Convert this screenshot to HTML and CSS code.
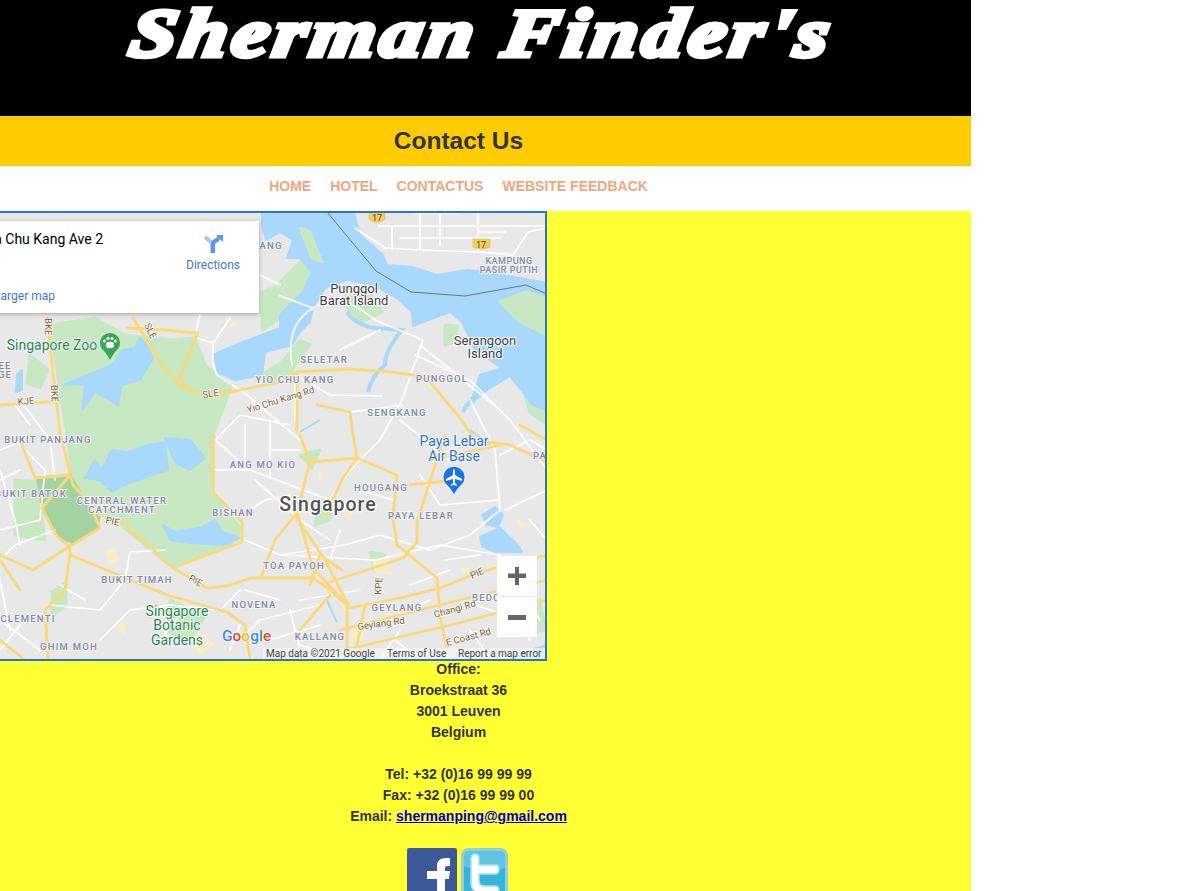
FILE: index.html
```html
<!DOCTYPE html>
<html lang="en">
<head>
<meta charset="utf-8">
<title>Contact Us</title>
<link rel="stylesheet" href="styles.css">
</head>
<body>
<div class="page">
  <header class="banner"><div class="logo">Sherman Finder's</div></header>
  <div class="titlebar"><h1>Contact Us</h1></div>
  <nav class="nav">
    <a href="#">Home</a><a href="#">Hotel</a><a href="#">ContactUs</a><a href="#">Website Feedback</a>
  </nav>
  <main class="content">
    <div class="mapframe">
      <svg class="map" viewBox="0 213 545 446" width="545" height="446" xmlns="http://www.w3.org/2000/svg">
        <g class="base">
          <rect class="land" x="0" y="205" width="550" height="460"/>
          <!-- greens -->
          <g class="green">
            <path d="M50 325 L95 318 L125 335 L170 340 L195 338 L205 365 L232 385 L213 435 L213 495 L242 530 L230 545 L173 568 L117 522 L73 485 L67 435 Z"/>
            <path d="M280 282 L300 262 L312 272 L303 292 L290 305 L280 318 Z"/>
            <path d="M345 296 L372 296 L382 312 L362 322 L350 315 Z"/>
            <path d="M524 392 L547 402 L547 425 L530 412 Z"/>
            <path d="M445 325 L457 326 L456 342 L445 345 Z"/>
            <path d="M15 480 L38 482 L45 540 L15 535 Z"/>
            <path d="M170 600 L205 615 L190 640 L168 632 Z"/>
            <path d="M262 292 L280 285 L280 318 L262 330 Z"/>
            <path d="M262 375 L297 352 L292 372 L268 385 Z"/>
            <path d="M300 340 L310 345 L290 372 L280 365 Z"/>
            <path d="M125 430 L140 428 L145 440 L130 442 Z"/>
            <path d="M30 355 L48 370 L40 388 L27 383 Z"/>
            <path d="M300 455 L320 450 L312 468 Z"/>
            <path d="M320 500 L335 498 L330 520 L315 525 Z"/>
            <path d="M515 610 L540 600 L545 630 L520 635 Z"/>
            <path d="M370 552 L385 555 L375 570 Z"/>
            <path d="M52 592 L66 582 L66 606 L52 616 Z"/>
          </g>
          <path class="darkgreen" d="M37 478 L70 475 L82 495 L100 515 L97 530 L72 543 L56 535 L42 508 Z"/>
          <g class="sand">
            <path d="M105 550 L115 548 L120 560 L110 565 Z"/>
            <path d="M372 560 L390 558 L392 575 L375 572 Z"/>
            <path d="M320 470 Q326 472 322 482 Q316 478 320 470 Z"/>
            <path d="M344 508 Q355 510 350 520 Q342 518 344 508 Z"/>
            <path d="M516 520 L528 524 L522 530 Z"/>
            <path d="M350 630 L360 625 L365 640 L352 642 Z"/>
            <path d="M460 570 L470 566 L472 578 Z"/>
            <path d="M230 318 L238 324 L230 328 Z"/>
            <path d="M115 625 L125 620 L125 635 Z"/>
            <path d="M190 640 L200 632 L215 645 L200 655 Z"/>
          </g>
          <!-- sea -->
          <path class="water" d="M262 205 L352 205 L360 235 L383 255 L387 265 L413 267 L437 275 L467 270 L483 272 L520 278 L547 283 L547 410 L533 405 L510 376 L487 390 L470 405 L480 375 L502 368 L475 350 L462 322 L450 312 L423 322 L413 326 L412 312 L397 298 L373 285 L347 280 L325 288 L313 308 L310 322 L300 332 L292 345 L265 352 L262 375 L235 380 L218 372 L213 355 L235 345 L280 328 L280 315 L290 305 L303 292 L312 272 L300 258 L287 258 L293 240 L280 232 L266 240 L262 225 Z"/>
          <path class="green-s" d="M300 228 L310 232 L322 262 L312 258 Z"/>
          <path class="green-s" d="M500 302 L525 292 L547 298 L547 335 L520 322 Z"/>
          <path class="channel" d="M347 312 Q355 325 375 328 L402 330 Q385 350 385 365 Q372 375 368 392 M463 412 Q470 395 497 382 L510 374"/>
          <path class="channel-thin" d="M300 432 L320 420 M470 430 L490 445 M327 600 L332 612 L337 622"/>
          <!-- reservoirs -->
          <path class="water" d="M153 358 L147 345 L140 338 L135 348 L122 350 L112 365 L95 372 L63 385 L85 384 L82 410 L95 392 L118 405 L122 385 L140 380 Z"/>
          <path class="water" d="M85 478 L95 460 L102 470 L112 450 L128 452 L148 445 L165 442 L168 470 L155 474 L125 485 L112 492 L100 480 Z"/>
          <path class="water" d="M165 438 L190 440 L205 458 L190 470 L175 462 Z"/>
          <path class="water" d="M163 525 L175 532 L200 528 L215 520 L222 532 L240 538 L225 545 L190 543 L170 540 Z"/>
          <path class="water" d="M482 515 L495 507 L503 515 L498 527 L487 525 Z"/>
          <path class="water" d="M480 537 L500 528 L518 545 L522 552 L495 552 L482 546 Z"/>
          <path class="water" d="M515 655 L547 645 L547 660 L510 660 Z"/>
          <path class="water" d="M17 375 L22 370 L22 390 L16 392 Z"/>
          <!-- border line -->
          <path class="border" d="M327 212 L376 271 L411 292 L465 296 L526 285 L547 294"/>
          <!-- minor roads -->
          <g class="roads">
            <path d="M355 228 L385 248 L420 250 L480 252 L513 255 L528 232 L547 228 M420 213 V250 M440 213 V245 M478 213 V252 M378 226 H547 M400 238 H500 M392 226 V250 M478 232 H505 M415 213 H460"/>
            <path d="M280 296 L313 308 Q340 290 375 320 L423 340 L402 400 L380 440 L350 470 L330 500 M313 308 Q285 325 292 365 M415 355 L470 380 L510 420 L547 470 M420 345 L500 410 M340 350 L380 330 M295 375 L330 395 M295 372 V420 M330 395 L382 396 M350 412 L402 405"/>
            <path d="M470 400 L495 450 L500 510 L470 535 L430 550 M400 420 L450 460 M500 455 L530 440 L547 450 M505 510 L547 490 M330 500 L250 470 L215 440 L240 415 L290 425 M430 550 L380 535 L345 545 L280 555 L245 540 M255 480 L300 520 L330 540 M245 425 V470 M270 420 V475 M270 450 L300 450 M215 470 L250 470 M250 510 L265 500 L290 495 M360 490 L392 500 M420 475 L440 505 L500 500"/>
            <path d="M0 530 L40 520 L45 470 L15 440 M0 560 L15 545 L55 530 M20 400 L50 440 L55 480 M0 450 L25 440 M125 580 L130 552 L165 550 M100 640 L130 610 L170 605 L220 610 L240 590 M50 605 L100 610 L125 580 M0 620 L40 650 M240 640 L260 620 L320 605 M200 315 Q195 330 197 338 L213 343 L230 318 M213 343 L213 352 Q212 365 217 375 L247 395 L300 440 M260 275 L280 285 M0 480 L20 470 M30 425 L15 405 M0 580 L10 630 M60 585 L85 600 M0 650 L20 625"/>
            <path d="M280 555 L375 560 L440 545 L500 555 L520 590 L540 620 M370 630 L430 600 M395 640 L420 660 M290 610 L300 650 M460 600 L520 620 M530 520 L547 540 M0 470 L15 520 L20 545 M180 615 L160 640 M245 590 L280 600 M300 600 L360 590 M340 530 L330 560 M445 560 L480 555 M410 585 L450 570 M230 650 L240 625 M270 640 L320 625 M400 630 L380 660 M470 630 L490 658 M510 600 L530 640 M300 645 L340 658"/>
          </g>
          <!-- highways -->
          <g class="highways">
            <path d="M127 328 L165 330 L197 333 M133 318 L150 345 L160 362 L167 372 L183 388 L210 395 L240 390 L280 382 L297 372 L350 369 L390 372 L413 375 L430 382 L445 400 L460 418 L475 440 L510 445 L547 462"/>
            <path d="M47 318 L53 372 L60 432 L63 445 L73 485 L100 515 L123 522 L173 568 L207 588 L228 586 L250 578 L280 578 L313 578 L330 590 L350 608 L400 598 L440 588 L480 572 L547 555"/>
            <path d="M0 405 L47 402 L60 402 M0 555 L33 570 L67 548 L100 528 M70 548 L70 555 L167 595 L227 612 L245 625 L250 660 M70 555 L65 590 L45 610 L48 660 M100 528 L90 505 M20 440 L35 478 L70 475 L42 508 L56 535 L68 545"/>
            <path d="M213 435 L213 492 L242 522 L242 542 L180 565 M300 435 L310 462 L297 512 L313 568 L347 605 L347 660 M297 372 V432 M198 333 L180 375 L185 388"/>
            <path d="M317 405 L350 412 L353 435 L357 458 L343 478 M310 462 L357 458 L397 475 L393 518 L397 545 L437 578 L440 615 L447 650 M445 435 L417 522 L417 542 L403 558 L330 582 M455 480 L410 485 M343 478 L325 515 M350 608 L325 560 L295 515 L275 540 L262 575 M342 570 L320 555 L310 585 M340 630 L440 605 L500 590 L547 580 M345 650 L450 625 L547 600 M520 425 L547 440 M430 460 L500 445"/>
            <path d="M355 655 L365 605 M330 595 L300 630 M0 640 L25 660 M20 590 L0 560"/>
          </g>
        </g>
        <!-- shields -->
        <path class="shield" d="M369 211 H385 V219 Q377 226 369 219 Z"/>
        <text class="t-shield" x="377" y="221">17</text>
        <path class="shield" d="M473 239 H490 V247 Q481 251 473 247 Z"/>
        <text class="t-shield" x="481" y="248">17</text>
        <!-- labels: districts -->
        <g class="area">
          <text x="324" y="363">SELETAR</text>
          <text x="295" y="383">YIO CHU KANG</text>
          <text x="442" y="382">PUNGGOL</text>
          <text x="397" y="416">SENGKANG</text>
          <text x="48" y="443">BUKIT PANJANG</text>
          <text x="31" y="497">BUKIT BATOK</text>
          <text x="122" y="504">CENTRAL WATER</text>
          <text x="122" y="513">CATCHMENT</text>
          <text x="233" y="516">BISHAN</text>
          <text x="263" y="468">ANG MO KIO</text>
          <text x="137" y="583">BUKIT TIMAH</text>
          <text x="254" y="608">NOVENA</text>
          <text x="28" y="622">CLEMENTI</text>
          <text x="69" y="650">GHIM MOH</text>
          <text x="294" y="569">TOA PAYOH</text>
          <text x="381" y="491">HOUGANG</text>
          <text x="421" y="519">PAYA LEBAR</text>
          <text x="397" y="611">GEYLANG</text>
          <text x="320" y="640">KALLANG</text>
          <text x="490" y="601">BEDOK</text>
          <text x="549" y="459">PASIR</text>
          <text x="271" y="249">ANG</text>
          <text x="5" y="369">EE</text>
          <text x="5" y="378">GE</text>
        </g>
        <g class="area small">
          <text x="509" y="264">KAMPUNG</text>
          <text x="509" y="273">PASIR PUTIH</text>
        </g>
        <!-- place names -->
        <g class="place">
          <text x="354" y="293">Punggol</text>
          <text x="354" y="305">Barat Island</text>
          <text x="485" y="345">Serangoon</text>
          <text x="485" y="358">Island</text>
        </g>
        <text class="city" x="328" y="511">Singapore</text>
        <g class="park">
          <text x="52" y="350">Singapore Zoo</text>
          <text x="177" y="616">Singapore</text>
          <text x="177" y="630">Botanic</text>
          <text x="177" y="645">Gardens</text>
        </g>
        <g class="airport">
          <text x="454" y="446">Paya Lebar</text>
          <text x="454" y="461">Air Base</text>
        </g>
        <!-- road names -->
        <g class="roadname">
          <text transform="translate(248 413) rotate(-17)">Yio Chu Kang Rd</text>
          <text transform="translate(203 398) rotate(-8)">SLE</text>
          <text transform="translate(144 325) rotate(65)">SLE</text>
          <text transform="translate(51 385) rotate(88)">BKE</text>
          <text transform="translate(18 405) rotate(-5)">KJE</text>
          <text transform="translate(105 523) rotate(12)">PIE</text>
          <text transform="translate(188 580) rotate(30)">PIE</text>
          <text transform="translate(472 579) rotate(-25)">PIE</text>
          <text transform="translate(381 595) rotate(-85)">KPE</text>
          <text transform="translate(435 618) rotate(-16)">Changi Rd</text>
          <text transform="translate(358 630) rotate(-8)">Geylang Rd</text>
          <text transform="translate(447 646) rotate(-15)">E Coast Rd</text>
          <text transform="translate(45 318) rotate(90)">BKE</text>
        </g>
        <!-- pins -->
        <path class="pin-green" d="M110 360 Q105 351 102 349 A10 10 0 1 1 118 349 Q115 351 110 360 Z"/>
        <g class="paw">
          <ellipse cx="110" cy="345" rx="4.2" ry="3.2"/>
          <circle cx="104.500" cy="341" r="1.500"/><circle cx="108" cy="338.500" r="1.500"/><circle cx="112" cy="338.500" r="1.500"/><circle cx="115.500" cy="341" r="1.500"/>
        </g>
        <path class="pin-blue" d="M454 494 Q449 486 446 484 A10.500 10.500 0 1 1 462 484 Q459 486 454 494 Z"/>
        <path class="plane" d="M454 469 Q455 469 455 472 V475 L462 479 V481 L455 479 V483 L457 485 V486 L454 485 L451 486 V485 L453 483 V479 L446 481 V479 L453 475 V472 Q453 469 454 469 Z"/>
        <!-- info panel -->
        <rect class="panel" x="-5" y="221" width="264" height="92"/>
        <text class="p-title" x="103" y="244">Choa Chu Kang Ave 2</text>
        <text class="p-link" x="55" y="300">View larger map</text>
        <text class="p-dir" x="213" y="269">Directions</text>
        <path class="dir-light" d="M205 237 L212 243 V253"/>
        <path class="dir-dark" d="M213 253 V245 Q213 241 217 240 L219 238"/>
        <path class="dir-head" d="M216 235 H223 V242 Z"/>
        <!-- zoom control -->
        <rect class="ctrl" x="497" y="556" width="40" height="81"/>
        <rect class="ctrl-sep" x="501" y="596" width="32" height="1"/>
        <path class="ctrl-sign" d="M508 573.500 H515 V567 H519 V573.500 H526 V578 H519 V585 H515 V578 H508 Z"/>
        <rect class="ctrl-sign" x="508" y="615" width="18" height="5"/>
        <!-- google -->
        <text class="glogo" x="222" y="641"><tspan class="gb">G</tspan><tspan class="gr">o</tspan><tspan class="gy">o</tspan><tspan class="gb">g</tspan><tspan class="gg">l</tspan><tspan class="gr">e</tspan></text>
        <!-- attribution -->
        <rect class="attr-bg" x="263" y="648" width="284" height="12"/>
        <text class="attr" x="266" y="657">Map data ©2021 Google</text>
        <text class="attr" x="387" y="657">Terms of Use</text>
        <text class="attr" x="458" y="657">Report a map error</text>
      </svg>
    </div>
    <address class="address">
      <p>Office:</p>
      <p>Broekstraat 36</p>
      <p>3001 Leuven</p>
      <p>Belgium</p>
      <p class="gap">Tel: +32 (0)16 99 99 99</p>
      <p>Fax: +32 (0)16 99 99 00</p>
      <p>Email: <a href="#">shermanping@gmail.com</a></p>
    </address>
    <div class="social">
      <svg class="fb" viewBox="0 0 50 50" width="50" height="50" xmlns="http://www.w3.org/2000/svg" aria-label="Facebook">
        <rect class="fb-bg" width="50" height="50" rx="2"/>
        <path class="fb-f" d="M30 50 V31 H20 V23 H30 V18 Q30 10 39 10 H43 V18 H40 Q38 18 38 21 V23 H43 L42 31 H38 V50 Z"/>
      </svg>
      <svg class="tw" viewBox="0 0 47 50" width="47" height="50" xmlns="http://www.w3.org/2000/svg" aria-label="Twitter">
        <rect class="tw-edge" width="47" height="50" rx="8"/>
        <rect class="tw-bg" x="3" y="3" width="41" height="47" rx="6"/>
        <path class="tw-top" d="M3 9 Q3 3 9 3 H38 Q44 3 44 9 V20 Q24 26 3 18 Z"/>
        <path class="tw-t" d="M10 10 Q11 6 14 6 Q18 6 18 10 V17 H34 Q38 17 38 21 Q38 26 34 26 H18 V33 Q18 38 24 38 H34 Q38 38 38 42 Q38 46 34 46 H23 Q10 46 10 34 Z"/>
      </svg>
    </div>
  </main>
</div>
</body>
</html>
```
FILE: styles.css
```css
html, body { margin: 0; padding: 0; background: #fff; }
body { height: 891px; overflow: hidden; font-family: "Liberation Sans", Arial, sans-serif; color: #333; }
.page { width: 971px; height: 891px; overflow: hidden; }

.banner { height: 116px; background: #000; overflow: hidden; }
.logo {
  width: 965px; text-align: center; color: #fff;
  font-family: "Liberation Serif", serif; font-weight: bold; font-style: italic;
  font-size: 68px; line-height: 66px; letter-spacing: 4px;
  -webkit-text-stroke: 5px #fff; white-space: nowrap;
  transform: scaleX(1.22) skewX(-8deg);
}

.titlebar { height: 50px; background: #fc0; width: 971px; display: flex; align-items: center; }
.titlebar h1 { width: 917px; margin: 0; text-align: center; font-size: 24.5px; line-height: 50px; color: #333; }

.nav { height: 45px; width: 917px; display: flex; justify-content: center; align-items: center; gap: 19px; padding-bottom: 5px; box-sizing: border-box; }
.nav a { color: #f2a67c; font-size: 14px; font-weight: bold; text-transform: uppercase; text-decoration: none; line-height: 40px; }

.content { background: #ff3; height: 680px; width: 971px; overflow: hidden; }
.mapframe { width: 547px; height: 450px; overflow: hidden; border: 2px solid #2a75c8; border-left: 0; box-sizing: border-box; }
.map { display: block; }

.address { width: 917px; margin-top: -2px; font-style: normal; font-weight: bold; font-size: 14px; line-height: 21px; text-align: center; color: #333; position: relative; }
.address p { margin: 0; }
.address .gap { margin-top: 21px; }
.address a { color: #00c; text-decoration: underline; }

.social { width: 915px; margin-top: 21px; display: flex; justify-content: center; gap: 4px; }
.social svg { display: block; flex: none; }

.base { filter: blur(.4px); }
.land { fill: #e8e8e8; }
.green path, .green-s { fill: #c8e8c4; stroke: #c8e8c4; stroke-width: 3; stroke-linejoin: round; }
.darkgreen { fill: #a3d3a0; stroke: #a3d3a0; stroke-width: 2; stroke-linejoin: round; }
.sand path { fill: #f5efc8; }
.water { fill: #a8d8fb; stroke: #a8d8fb; stroke-width: 2; stroke-linejoin: round; }
.channel { fill: none; stroke: #a8d8fb; stroke-width: 4; }
.channel-thin { fill: none; stroke: #a8d8fb; stroke-width: 2; }
.border { fill: none; stroke: #6a7480; stroke-width: 1; }
.roads path { fill: none; stroke: #fff; stroke-width: 1.7; stroke-linejoin: round; stroke-linecap: round; }
.highways path { fill: none; stroke: #fdd877; stroke-width: 2.8; stroke-linejoin: round; stroke-linecap: round; }
.shield { fill: #f5cf55; stroke: #dcb23c; stroke-width: .5; }
.t-shield { font: 9px Roboto, sans-serif; fill: #444; text-anchor: middle; }

.area text { font: 500 9.5px Roboto, sans-serif; letter-spacing: 1.2px; fill: #8388a4; text-anchor: middle; paint-order: stroke; stroke: #f2f2f2; stroke-width: 2px; }
.area.small text { font-size: 9px; letter-spacing: .5px; }
.place text { font: 13px Roboto, sans-serif; fill: #3c3c3c; text-anchor: middle; paint-order: stroke; stroke: #fff; stroke-width: 2px; }
.city { font: 500 19.5px Roboto, sans-serif; letter-spacing: 1px; fill: #505458; text-anchor: middle; paint-order: stroke; stroke: #fff; stroke-width: 2.5px; }
.park text { font: 14px Roboto, sans-serif; fill: #26854f; text-anchor: middle; paint-order: stroke; stroke: #fff; stroke-width: 1.5px; }
.airport text { font: 14px Roboto, sans-serif; fill: #2a6fd8; text-anchor: middle; paint-order: stroke; stroke: #fff; stroke-width: 1.5px; }
.roadname text { font: 9.5px Roboto, sans-serif; fill: #7a5a30; paint-order: stroke; stroke: #fff; stroke-width: 1.5px; }

.pin-green { fill: #34a853; }
.paw { fill: #fff; }
.pin-blue { fill: #1a73e8; }
.plane { fill: #fff; }

.panel { fill: #fff; filter: drop-shadow(0 1px 2px rgba(0,0,0,.3)); }
.p-title { font: 14px Roboto, sans-serif; fill: #000; text-anchor: end; }
.p-link { font: 12px Roboto, sans-serif; fill: #4a76d0; text-anchor: end; }
.p-dir { font: 12px Roboto, sans-serif; fill: #4a76d0; text-anchor: middle; }
.dir-light { fill: none; stroke: #a8c6ec; stroke-width: 4; }
.dir-dark { fill: none; stroke: #5c95e2; stroke-width: 4; }
.dir-head { fill: #5c95e2; }

.ctrl { fill: #fff; }
.ctrl-sep { fill: #e6e6e6; }
.ctrl-sign { fill: #666; }
.glogo { font: 500 15.5px Roboto, sans-serif; paint-order: stroke; stroke: #fff; stroke-width: 1.5px; }
.gb { fill: #4285f4; } .gr { fill: #ea4335; } .gy { fill: #fbbc05; } .gg { fill: #34a853; }
.attr-bg { fill: rgba(245,245,245,.75); }
.attr { font: 10px Roboto, sans-serif; fill: #444; }

.fb-bg { fill: #3b5998; }
.fb-f { fill: #fff; }
.tw-edge { fill: #8fd0dc; }
.tw-bg { fill: #35b4dc; }
.tw-top { fill: #62c4e2; }
.tw-t { fill: #fff; stroke: #a8e0f0; stroke-width: 1.5; }
```
